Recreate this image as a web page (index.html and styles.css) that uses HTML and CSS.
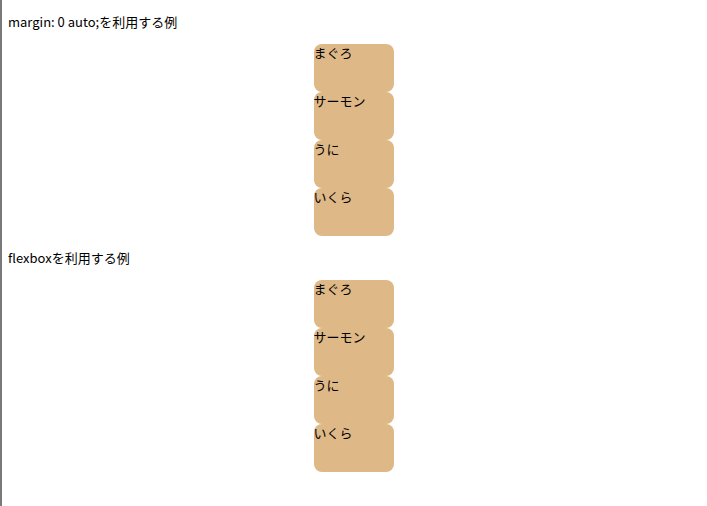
FILE: index.html
```html
<!DOCTYPE html>
<html lang="ja">
<head>
<meta charset="utf-8">
<link rel="stylesheet" href="styles.css">
</head>
<body>
<p class="title">margin: 0 auto;を利用する例</p>
<div class="list-auto">
  <div class="item">まぐろ</div>
  <div class="item">サーモン</div>
  <div class="item">うに</div>
  <div class="item">いくら</div>
</div>
<p class="title">flexboxを利用する例</p>
<div class="list-flex">
  <div class="item">まぐろ</div>
  <div class="item">サーモン</div>
  <div class="item">うに</div>
  <div class="item">いくら</div>
</div>
</body>
</html>
```
FILE: styles.css
```css
html {
  border-left: 2px solid #7a7a7a;
  min-height: 100%;
  box-sizing: border-box;
}
body {
  margin: 0 8px 8px 6px;
  font-family: "Noto Sans CJK JP", "Noto Sans", sans-serif;
  font-size: 13px;
  line-height: 18px;
  color: #000;
  background: #fff;
}
.title {
  margin: 13px 0;
}
.item {
  width: 80px;
  height: 48px;
  background: #deb887;
  border-radius: 8px;
}
.list-auto .item {
  margin: 0 auto;
}
.list-flex {
  display: flex;
  flex-direction: column;
  align-items: center;
}
```
